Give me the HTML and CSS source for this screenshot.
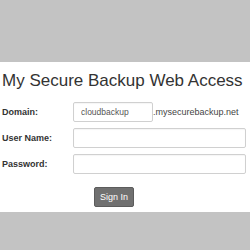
FILE: index.html
```html
<!DOCTYPE html>
<html>
<head>
<meta charset="utf-8">
<link rel="stylesheet" href="styles.css">
</head>
<body>
<div class="spacer"></div>
<div class="panel">
  <h1 class="title">My Secure Backup Web Access</h1>
  <form class="form">
    <label class="label">Domain:</label>
    <div class="field">
      <input class="input input-domain" type="text" value="cloudbackup">
      <span class="suffix">.mysecurebackup.net</span>
    </div>
    <label class="label">User Name:</label>
    <div class="field"><input class="input input-wide" type="text"></div>
    <label class="label">Password:</label>
    <div class="field"><input class="input input-wide" type="password"></div>
  </form>
  <div class="actions"><button class="btn" type="button">Sign In</button></div>
</div>
</body>
</html>
```
FILE: styles.css
```css
html, body {
  margin: 0;
  padding: 0;
  background: #c3c3c3;
  font-family: "Liberation Sans", Arial, sans-serif;
  color: #333;
}
.spacer { height: 62px; }
.panel {
  background: #fff;
  height: 150px;
  box-sizing: border-box;
  padding: 9px 0 0 2px;
}
.title {
  margin: 0;
  font-size: 17px;
  line-height: 20px;
  font-weight: normal;
  color: #333;
}
.form {
  margin-top: 11px;
  display: grid;
  grid-template-columns: 71px 1fr;
  row-gap: 6px;
  align-items: center;
}
.label {
  font-size: 9px;
  font-weight: bold;
  color: #333;
}
.field {
  display: flex;
  align-items: center;
}
.input {
  box-sizing: border-box;
  height: 20px;
  border: 1px solid #d0d0d0;
  border-radius: 2px;
  padding: 0 7px;
  font-family: "Liberation Sans", Arial, sans-serif;
  font-size: 8.5px;
  color: #555;
  background: #fff;
  box-shadow: inset 0 1px 1px rgba(0,0,0,0.04);
  outline: none;
}
.input-domain { width: 80px; }
.input-wide { width: 173px; }
.suffix {
  font-size: 9px;
  color: #444;
  margin-left: 0;
}
.actions {
  margin-top: 12px;
  padding-left: 92px;
}
.btn {
  box-sizing: border-box;
  height: 20px;
  width: 40px;
  padding: 0;
  border: 1px solid #5c5c5c;
  border-radius: 2px;
  background: #707070;
  color: #fff;
  font-family: "Liberation Sans", Arial, sans-serif;
  font-size: 9px;
}
```
